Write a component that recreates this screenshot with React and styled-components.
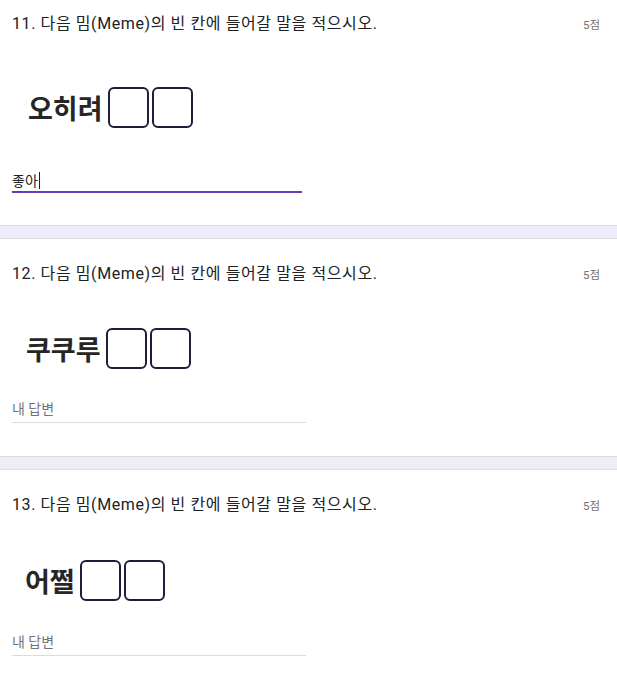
import React from 'react'
import styled, { createGlobalStyle } from 'styled-components'

const GlobalStyle = createGlobalStyle`
  body {
    margin: 0;
    background: #f0ebf8;
    font-family: Roboto, "Noto Sans CJK KR", sans-serif;
    color: #202124;
  }
`

const Page = styled.div`
  display: flex;
  flex-direction: column;
  gap: 12px;
  margin-top: -12px;
`

const Card = styled.section`
  background: #fff;
  border-top: 1px solid #dadce0;
  border-bottom: 1px solid #dadce0;
  padding: 24px 17px ${(p) => p.$bottom}px 12px;
`

const TitleRow = styled.div`
  display: flex;
  justify-content: space-between;
  align-items: center;
  height: 22px;
`

const Title = styled.div`
  font-size: 16px;
  line-height: 22px;
  letter-spacing: 0.6px;
`

const Points = styled.div`
  font-size: 11.5px;
  color: #75706d;
`

const Meme = styled.div`
  display: flex;
  align-items: center;
  margin-top: ${(p) => p.$top}px;
  height: ${(p) => p.$height}px;
  padding-left: ${(p) => p.$indent}px;
`

const MemeWord = styled.span`
  font-family: "Noto Sans CJK KR", sans-serif;
  font-weight: 700;
  font-size: 27px;
  color: #262626;
  margin-right: ${(p) => p.$gap}px;
`

const Blank = styled.span`
  box-sizing: border-box;
  width: 41px;
  height: 41px;
  border: 2px solid #1d1d3d;
  border-radius: 6px;
  & + & {
    margin-left: 3px;
  }
`

const Field = styled.div`
  width: ${(p) => (p.$filled ? 290 : 294)}px;
  padding-bottom: ${(p) => (p.$filled ? 0 : 3)}px;
  border-bottom: ${(p) => (p.$filled ? '2px solid #673ab7' : '1px solid #dadce0')};
  font-size: 14px;
  line-height: 20px;
  color: ${(p) => (p.$filled ? '#202124' : '#70757a')};
`

const Caret = styled.span`
  display: inline-block;
  width: 1px;
  height: 17px;
  margin-left: 1px;
  background: #202124;
  vertical-align: -3px;
`

const questions = [
  { no: 11, word: '오히려', answer: '좋아', top: 9, height: 127, indent: 16, gap: 5, bottom: 32 },
  { no: 12, word: '쿠쿠루', answer: '', top: 12, height: 102, indent: 14, gap: 5, bottom: 33 },
  { no: 13, word: '어쩔', answer: '', top: 12, height: 104, indent: 13, gap: 5, bottom: 33 },
]

export default function App() {
  return (
    <>
      <GlobalStyle />
      <Page>
        {questions.map((q) => (
          <Card key={q.no} $bottom={q.bottom}>
            <TitleRow>
              <Title>{q.no}. 다음 밈(Meme)의 빈 칸에 들어갈 말을 적으시오.</Title>
              <Points>5점</Points>
            </TitleRow>
            <Meme $top={q.top} $height={q.height} $indent={q.indent}>
              <MemeWord $gap={q.gap}>{q.word}</MemeWord>
              <Blank />
              <Blank />
            </Meme>
            {q.answer ? (
              <Field $filled>
                {q.answer}
                <Caret />
              </Field>
            ) : (
              <Field>내 답변</Field>
            )}
          </Card>
        ))}
      </Page>
    </>
  )
}
